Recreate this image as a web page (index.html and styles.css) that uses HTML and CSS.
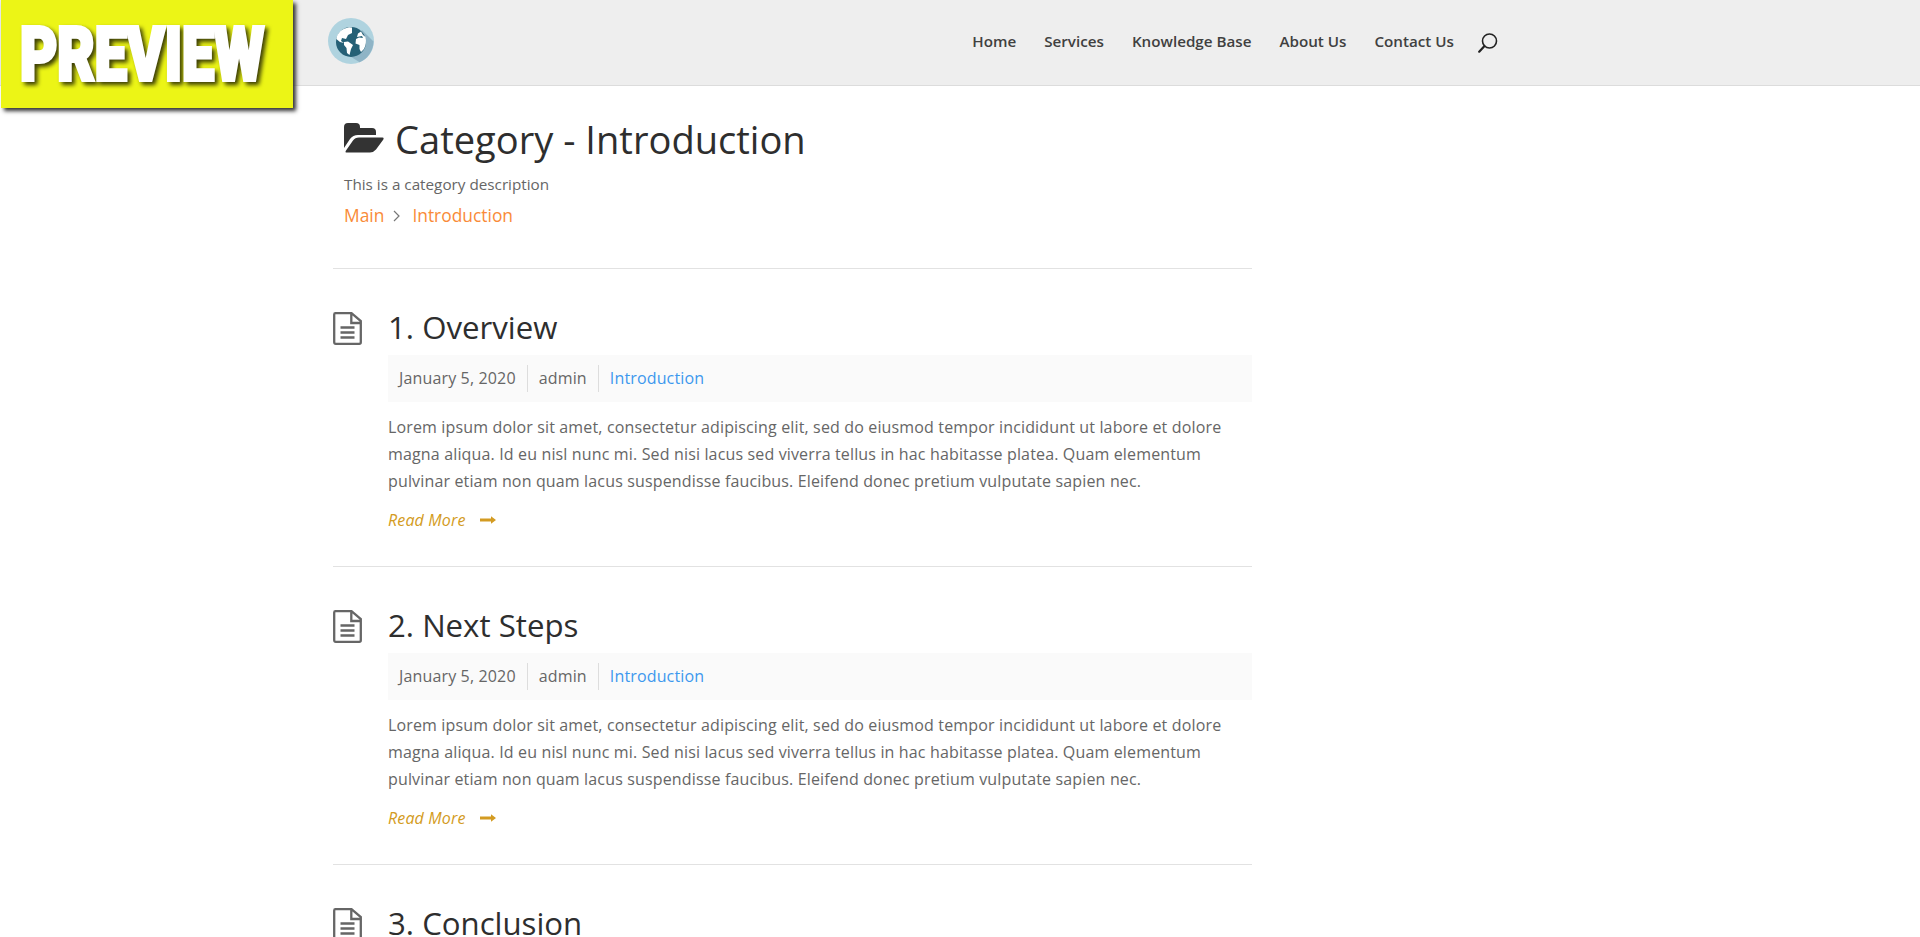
FILE: index.html
```
<!DOCTYPE html>
<html lang="en">
<head>
<meta charset="utf-8">
<title>Category - Introduction</title>
<link rel="stylesheet" href="styles.css">
</head>
<body>
<svg width="0" height="0" class="defs">
  <symbol id="doc" viewBox="0 0 29 33">
    <path d="M2.500 1.200H18.500L27.800 9V30.300Q27.800 31.800 26.300 31.800H2.700Q1.200 31.800 1.200 30.300V2.500Q1.200 1.200 2.500 1.200ZM18.300 1.500V11H27.500M7.500 15.500H21.500M7.500 20.500H21.500M7.500 25.500H21.500" fill="none" stroke="#666" stroke-width="2.300"/>
  </symbol>
  <symbol id="arrow" viewBox="0 0 16 8">
    <path d="M0 2.600H11V.3L16 4L11 7.700V5.400H0Z" fill="#d39b22"/>
  </symbol>
</svg>
<header class="header">
  <svg class="logo" viewBox="0 0 46 46">
    <circle cx="23" cy="23" r="23" fill="#afd3df"/>
    <path d="M34 12L45.500 23.500A23 23 0 0 1 31.500 44.300L14 33Z" fill="#8fb4c6"/>
    <circle cx="23" cy="24" r="15" fill="#256076"/>
    <path d="M8.300 21Q10 11 21 9.200L24 9.500L24 15L20 17L18 21L14 20L13 23L16 25L12 24Z" fill="#fff"/>
    <path d="M16 24L20 23.500L25 27L23 31L21.500 37L19 35L18.500 30L16 27Z" fill="#fff"/>
    <path d="M29 19L30 15.500L33 13.500L35 17L37.500 19Q39 25 36 31L33 34L31.500 31V27L27.500 25.500L28 21L31 19.500L35 20L34 18Z" fill="#fff"/>
  </svg>
  <nav class="nav">
    <a>Home</a><a>Services</a><a>Knowledge Base</a><a>About Us</a><a>Contact Us</a>
    <svg class="search" viewBox="0 0 20 20"><circle cx="11.500" cy="8" r="7" fill="none" stroke="#222" stroke-width="1.600"/><path d="M6.500 13L1.200 18.700" stroke="#222" stroke-width="2.200" stroke-linecap="round"/></svg>
  </nav>
</header>
<div class="badge">
  <svg viewBox="0 0 292 108"><text class="badge-text" x="19" y="80" textLength="244" lengthAdjust="spacingAndGlyphs">PREVIEW</text></svg>
</div>
<main class="content">
  <section class="category">
    <h1><svg class="folder" viewBox="0 0 40 30"><path d="M0 25V4Q0 0 4 0H12Q16 0 16 4V5H28Q32 5 32 9V12H14Q9 12 6 16Z"/><path d="M2 29.500Q1 29 2 27.500L9 17.500Q11 14.500 15 14.500H38.500Q40.500 14.800 39 17L32 26.500Q29.500 29.500 26 29.500Z"/></svg><span>Category - Introduction</span></h1>
    <p class="desc">This is a category description</p>
    <div class="crumbs"><a>Main</a><svg class="chev" viewBox="0 0 7 12"><path d="M1 1L6 6L1 11" fill="none" stroke="#777" stroke-width="1.200"/></svg><a>Introduction</a></div>
  </section>
  <article class="post">
    <svg class="doc"><use href="#doc"/></svg>
    <div class="body">
      <h2>1. Overview</h2>
      <div class="meta"><span>January 5, 2020</span><span>admin</span><a>Introduction</a></div>
      <p class="text">Lorem ipsum dolor sit amet, consectetur adipiscing elit, sed do eiusmod tempor incididunt ut labore et dolore<br>magna aliqua. Id eu nisl nunc mi. Sed nisi lacus sed viverra tellus in hac habitasse platea. Quam elementum<br>pulvinar etiam non quam lacus suspendisse faucibus. Eleifend donec pretium vulputate sapien nec.</p>
      <a class="more">Read More<svg class="arrow"><use href="#arrow"/></svg></a>
    </div>
  </article>
  <article class="post">
    <svg class="doc"><use href="#doc"/></svg>
    <div class="body">
      <h2>2. Next Steps</h2>
      <div class="meta"><span>January 5, 2020</span><span>admin</span><a>Introduction</a></div>
      <p class="text">Lorem ipsum dolor sit amet, consectetur adipiscing elit, sed do eiusmod tempor incididunt ut labore et dolore<br>magna aliqua. Id eu nisl nunc mi. Sed nisi lacus sed viverra tellus in hac habitasse platea. Quam elementum<br>pulvinar etiam non quam lacus suspendisse faucibus. Eleifend donec pretium vulputate sapien nec.</p>
      <a class="more">Read More<svg class="arrow"><use href="#arrow"/></svg></a>
    </div>
  </article>
  <article class="post last">
    <svg class="doc"><use href="#doc"/></svg>
    <div class="body">
      <h2>3. Conclusion</h2>
    </div>
  </article>
</main>
</body>
</html>
```
FILE: styles.css
```
* { box-sizing: border-box; }
body { margin: 0; height: 937px; overflow: hidden; background: #fff; color: #666; font-family: "Open Sans", sans-serif; font-size: 16px; }
h1, h2, p { margin: 0; font-weight: 400; }
svg { display: block; flex: none; }
.defs { position: absolute; }
.header { display: flex; justify-content: space-between; height: 86px; padding: 18px 422px 0 328px; background: #eee; border-bottom: 1px solid #dcdcdc; }
.logo { width: 46px; height: 46px; }
.nav { display: flex; gap: 28px; height: 46px; line-height: 46px; font-size: 15.200px; font-weight: 600; color: #404040; white-space: nowrap; }
.search { width: 20px; height: 20px; margin: 15px 0 0 -4px; }
.badge { position: absolute; left: 1px; top: 0; width: 292px; height: 108px; background: #ecf516; box-shadow: 3px 3px 4px #333; }
.badge svg { width: 292px; height: 108px; overflow: visible; }
.badge-text { font-family: Roboto, sans-serif; font-weight: 900; font-size: 75px; fill: #fff; stroke: #fff; stroke-width: 4px; filter: drop-shadow(3px 3px 2px rgba(0,0,0,.75)); }
.content { width: 919px; margin-left: 333px; }
.category { height: 182px; padding: 25px 0 0 11px; }
h1 { display: flex; gap: 11px; height: 56px; line-height: 56px; font-size: 38.100px; color: #2e2e2e; white-space: nowrap; }
.folder { width: 40px; height: 30px; margin-top: 12px; fill: #333; }
.desc { height: 33px; line-height: 35px; font-size: 15.250px; }
.crumbs { display: flex; align-items: center; height: 30px; font-size: 17.400px; color: #f98b38; }
.chev { width: 7px; height: 12px; margin: 2px 12px 0 9px; }
.post { display: flex; height: 298px; padding-top: 43px; border-top: 1px solid #e2e2e2; }
.post.last { height: 73px; }
.doc { width: 29px; height: 33px; margin-right: 26px; }
.body { width: 864px; }
h2 { height: 43px; line-height: 31px; font-size: 31.200px; color: #2e2e2e; white-space: nowrap; }
.last h2 { height: 29px; }
.meta { display: flex; align-items: center; height: 47px; padding-left: 11px; background: #fafafa; letter-spacing: .15px; }
.meta span, .meta a { height: 27px; line-height: 27px; }
.meta span { padding-right: 11px; margin-right: 11px; border-right: 1px solid #ddd; }
.meta a { color: #3d98ee; }
.text { height: 95px; padding-top: 12px; line-height: 27.200px; letter-spacing: .15px; white-space: nowrap; }
.more { display: flex; align-items: center; height: 46px; font-style: italic; letter-spacing: .15px; color: #d39b22; }
.arrow { width: 16px; height: 8px; margin-left: 14px; }
```
